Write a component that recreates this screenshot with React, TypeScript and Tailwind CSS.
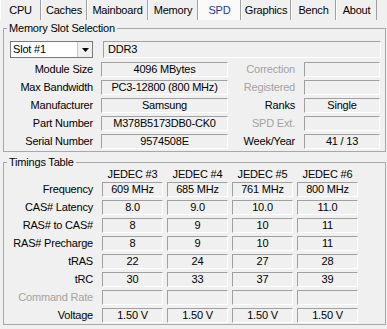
import React from "react";

const tabs = [
  { name: "CPU", cls: "w-[41px]" },
  { name: "Caches", cls: "w-[46px]" },
  { name: "Mainboard", cls: "w-[61px]" },
  { name: "Memory", cls: "w-[50px]" },
  { name: "SPD", cls: "w-[43px]", active: true },
  { name: "Graphics", cls: "w-[50px]" },
  { name: "Bench", cls: "w-[45px]" },
  { name: "About", cls: "w-[41px]" },
];

function Box({ className = "", children }: { className?: string; children?: React.ReactNode }) {
  return (
    <div
      className={`h-[15px] flex items-center border-t border-l border-b border-r border-t-[#a0a0a0] border-l-[#a0a0a0] border-b-white border-r-white ${className}`}
    >
      {children}
    </div>
  );
}

function Label({ className = "", children, disabled }: { className?: string; children?: React.ReactNode; disabled?: boolean }) {
  return (
    <div className={`h-[15px] flex items-center justify-end whitespace-nowrap ${disabled ? "text-[#a3a3a3]" : "text-black"} ${className}`}>
      {children}
    </div>
  );
}

const infoRows = [
  { l: "Module Size", v: "4096 MBytes", l2: "Correction", d2: true, v2: "" },
  { l: "Max Bandwidth", v: "PC3-12800 (800 MHz)", l2: "Registered", d2: true, v2: "" },
  { l: "Manufacturer", v: "Samsung", l2: "Ranks", d2: false, v2: "Single" },
  { l: "Part Number", v: "M378B5173DB0-CK0", l2: "SPD Ext.", d2: true, v2: "" },
  { l: "Serial Number", v: "9574508E", l2: "Week/Year", d2: false, v2: "41 / 13" },
];

const timingRows: { l: string; v: string[]; d?: boolean }[] = [
  { l: "Frequency", v: ["609 MHz", "685 MHz", "761 MHz", "800 MHz"] },
  { l: "CAS# Latency", v: ["8.0", "9.0", "10.0", "11.0"] },
  { l: "RAS# to CAS#", v: ["8", "9", "10", "11"] },
  { l: "RAS# Precharge", v: ["8", "9", "10", "11"] },
  { l: "tRAS", v: ["22", "24", "27", "28"] },
  { l: "tRC", v: ["30", "33", "37", "39"] },
  { l: "Command Rate", v: ["", "", "", ""], d: true },
  { l: "Voltage", v: ["1.50 V", "1.50 V", "1.50 V", "1.50 V"] },
];

export default function App() {
  return (
    <div className="w-[387px] h-[329px] overflow-hidden bg-[#f0f0f0] text-[11px] leading-none text-black [font-family:'Liberation_Sans',Arial,sans-serif] tracking-[-0.2px]">
      {/* Tabs */}
      <div className="flex h-[20px]">
        {tabs.map((t) => (
          <div
            key={t.name}
            className={`${t.cls} h-full flex items-center justify-center border-l border-r border-l-white border-r-[#a0a0a0] ${
              t.active ? "bg-[#fafafa] text-[#23389c]" : "bg-[#f0f0f0]"
            }`}
          >
            {t.name}
          </div>
        ))}
      </div>

      {/* Memory Slot Selection */}
      <fieldset className="mt-[3px] ml-[3px] w-[383px] border border-[#a8a8a8] pb-[2px]">
        <legend className="ml-[3px] px-[2px] h-[11px] leading-[11px]">Memory Slot Selection</legend>
        <div className="flex mt-[7px] h-[17px]">
          <div className="ml-[6px] w-[83px] h-full flex items-stretch bg-white border border-[#7a7a7a]">
            <div className="flex-1 flex items-center pl-[2px]">Slot #1</div>
            <div className="w-[15px] flex items-center justify-center bg-[#f0f0f0] border-l border-l-[#c8c8c8]">
              <svg width="7" height="4" viewBox="0 0 7 4">
                <path d="M0 0 H7 L3.5 4 Z" fill="#000" />
              </svg>
            </div>
          </div>
          <div className="ml-[10px] w-[278px] h-full flex items-center pl-[4px] border-t border-l border-b border-r border-t-[#a0a0a0] border-l-[#a0a0a0] border-b-white border-r-white">
            DDR3
          </div>
        </div>
        <div className="flex flex-col gap-[3px] mt-[4px]">
          {infoRows.map((r) => (
            <div key={r.l} className="flex">
              <Label className="w-[89px]">{r.l}</Label>
              <Box className="ml-[8px] w-[127px] justify-center">{r.v}</Box>
              <Label className="w-[67px]" disabled={r.d2}>
                {r.l2}
              </Label>
              <Box className="ml-[9px] w-[76px] justify-center">{r.v2}</Box>
            </div>
          ))}
        </div>
      </fieldset>

      {/* Timings Table */}
      <fieldset className="mt-[5px] ml-[3px] w-[383px] border border-[#a8a8a8] pb-[1px]">
        <legend className="ml-[3px] px-[2px] h-[11px] leading-[11px]">Timings Table</legend>
        <div className="flex h-[14px] pt-[1px]">
          <div className="w-[89px]" />
          <div className="ml-[9px] flex gap-[4px]">
            {["JEDEC #3", "JEDEC #4", "JEDEC #5", "JEDEC #6"].map((h) => (
              <div key={h} className="w-[61px] text-center">
                {h}
              </div>
            ))}
          </div>
        </div>
        <div className="flex flex-col gap-[3px]">
          {timingRows.map((r) => (
            <div key={r.l} className="flex">
              <Label className="w-[89px]" disabled={r.d}>
                {r.l}
              </Label>
              <div className="ml-[9px] flex gap-[4px]">
                {r.v.map((v, i) => (
                  <Box key={i} className="w-[61px] justify-center">
                    {v}
                  </Box>
                ))}
              </div>
            </div>
          ))}
        </div>
      </fieldset>
    </div>
  );
}
